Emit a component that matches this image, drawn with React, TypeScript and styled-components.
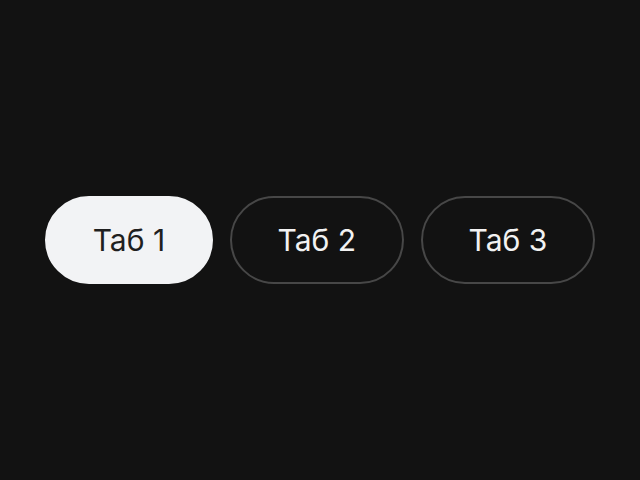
import React, { useState } from "react";
import styled, { createGlobalStyle } from "styled-components";

const Global = createGlobalStyle`
  html, body { margin: 0; padding: 0; background: #121212; }
  body { font-family: Inter, "Noto Sans", sans-serif; }
`;

const Page = styled.div`
  width: 640px;
  height: 480px;
  display: flex;
  align-items: center;
  justify-content: center;
`;

const TabList = styled.div`
  display: flex;
  gap: 16.5px;
`;

const Tab = styled.button<{ $active: boolean }>`
  box-sizing: border-box;
  height: 88px;
  padding: 0 46px;
  border-radius: 44px;
  border: 2px solid ${(p) => (p.$active ? "#f2f3f5" : "#474747")};
  background: ${(p) => (p.$active ? "#f2f3f5" : "transparent")};
  color: ${(p) => (p.$active ? "#1f1f1f" : "#f2f2f2")};
  font-family: Inter, "Noto Sans", sans-serif;
  font-size: 30px;
  font-weight: 400;
  line-height: 40px;
  cursor: pointer;
  display: flex;
  align-items: center;
  justify-content: center;
`;

export default function App() {
  const [active, setActive] = useState(0);
  const tabs = ["Таб 1", "Таб 2", "Таб 3"];
  return (
    <>
      <Global />
      <Page>
        <TabList>
          {tabs.map((t, i) => (
            <Tab key={t} $active={i === active} onClick={() => setActive(i)}>
              {t}
            </Tab>
          ))}
        </TabList>
      </Page>
    </>
  );
}
